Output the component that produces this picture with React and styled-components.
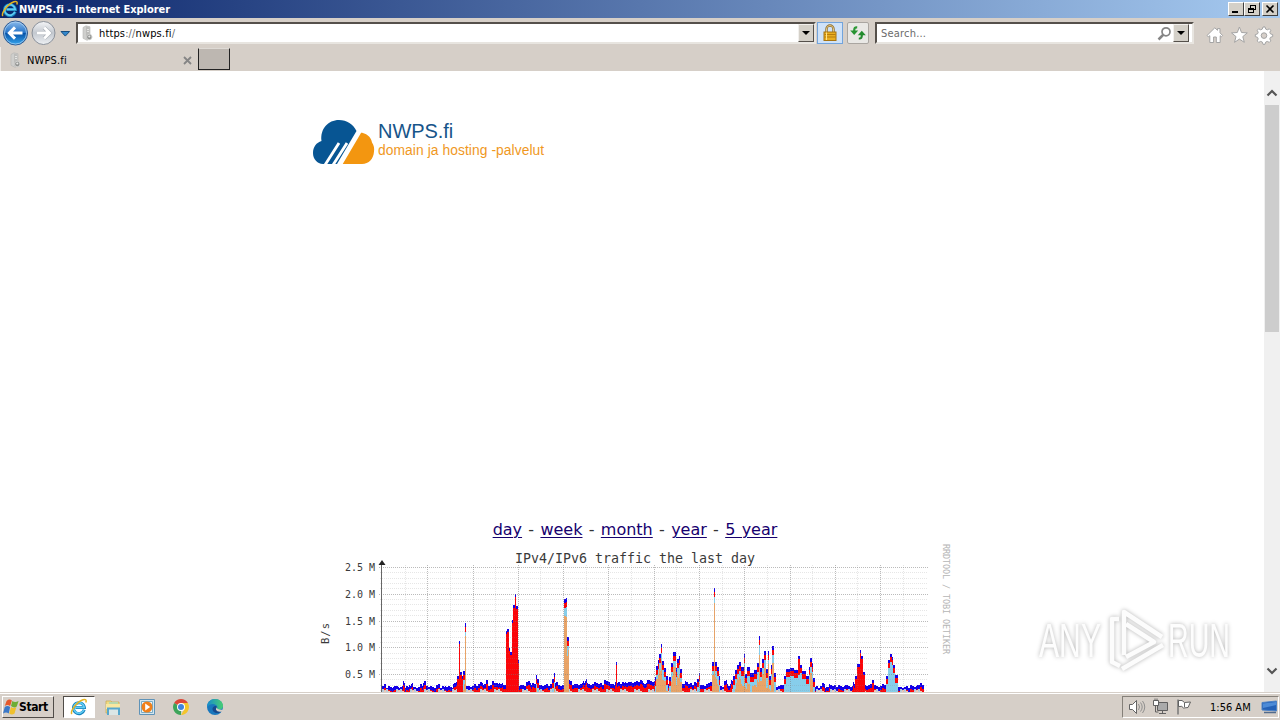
import React from "react";
import styled, { createGlobalStyle } from "styled-components";

// [x, top] steps of the traffic graph; the third value is what fills the bar
const TRAFFIC = [
  [382, 686, "q"], [384, 685, "q"], [386, 687, "q"], [393, 686, "q"], [399, 687, "q"], [403, 682, "q"],
  [405, 687, "q"], [409, 685, "q"], [411, 683, "q"], [413, 687, "q"], [420, 685, "q"], [423, 682, "q"],
  [426, 686, "q"], [432, 687, "q"], [436, 685, "q"], [440, 687, "q"], [445, 686, "q"], [450, 687, "q"],
  [453, 683, "q"], [457, 676, "r"], [459, 641, "r"], [460, 672, "r"], [462, 676, "r"], [463, 671, "t"],
  [465, 623, "t"], [466, 686, "q"], [474, 685, "q"], [480, 682, "q"], [483, 684, "q"], [486, 680, "q"],
  [488, 685, "q"], [492, 682, "q"], [496, 684, "q"], [499, 683, "q"], [503, 685, "q"], [506, 631, "r"],
  [507, 629, "r"], [509, 648, "r"], [510, 652, "r"], [512, 620, "r"], [513, 605, "r"], [515, 594, "r"],
  [516, 606, "r"], [518, 660, "r"], [519, 685, "q"], [526, 682, "q"], [531, 684, "q"], [536, 675, "t"],
  [537, 679, "t"], [539, 685, "q"], [552, 679, "t"], [554, 673, "t"], [555, 682, "q"], [558, 685, "q"],
  [564, 599, "t"], [566, 598, "t"], [567, 637, "t"], [569, 681, "q"], [572, 684, "q"], [583, 682, "q"],
  [585, 680, "q"], [587, 684, "q"], [594, 682, "q"], [598, 684, "q"], [604, 681, "q"], [610, 684, "q"],
  [615, 681, "q"], [616, 662, "r"], [617, 683, "q"], [625, 682, "q"], [638, 681, "q"], [643, 683, "q"],
  [647, 680, "q"], [652, 682, "q"], [655, 677, "t"], [656, 666, "t"], [658, 660, "t"], [659, 654, "t"],
  [661, 644, "t"], [662, 661, "t"], [664, 668, "t"], [666, 676, "t"], [668, 683, "q"], [669, 677, "t"],
  [671, 663, "t"], [673, 652, "t"], [676, 668, "t"], [677, 659, "t"], [679, 656, "t"], [680, 669, "t"],
  [682, 684, "q"], [685, 681, "q"], [688, 684, "q"], [694, 683, "q"], [697, 679, "s"], [699, 673, "s"],
  [700, 685, "q"], [706, 684, "q"], [710, 681, "q"], [712, 662, "t"], [714, 588, "t"], [715, 662, "t"],
  [717, 667, "t"], [719, 676, "t"], [720, 686, "q"], [724, 681, "q"], [727, 685, "q"], [731, 681, "q"],
  [733, 676, "t"], [735, 670, "t"], [737, 665, "t"], [739, 662, "t"], [741, 667, "t"], [744, 654, "t"],
  [745, 674, "t"], [747, 667, "t"], [750, 673, "t"], [754, 670, "t"], [757, 663, "t"], [759, 636, "t"],
  [760, 668, "t"], [762, 659, "t"], [764, 651, "t"], [766, 669, "t"], [768, 651, "t"], [769, 676, "t"],
  [771, 665, "t"], [772, 646, "t"], [774, 673, "t"], [776, 686, "q"], [782, 684, "q"], [784, 676, "s"],
  [786, 669, "s"], [790, 668, "s"], [794, 670, "s"], [798, 656, "r2"], [800, 665, "s"], [802, 671, "s"],
  [806, 676, "s"], [809, 667, "s"], [810, 658, "t"], [812, 663, "t"], [813, 678, "t"], [815, 687, "q"],
  [822, 683, "q"], [825, 687, "q"], [829, 684, "q"], [832, 686, "q"], [845, 685, "q"], [850, 687, "q"],
  [853, 683, "q"], [855, 676, "r"], [857, 664, "r"], [860, 650, "r"], [861, 656, "r"], [863, 672, "r"],
  [865, 685, "q"], [872, 680, "r"], [874, 686, "q"], [882, 684, "q"], [886, 676, "s"], [888, 660, "s"],
  [890, 654, "s"], [892, 657, "s"], [893, 665, "s"], [895, 675, "s"], [898, 687, "q"], [910, 686, "q"],
  [917, 685, "q"], [920, 682, "q"], [922, 685, "q"], [924, 700, "q"],
];

const BLUE = "#1400e8";
const RED = "#fb0509";
const SKY = "#87ceeb";
const SAND = "#e9a467";

function stack(x, top, kind) {
  const pair = x >> 1;
  const wobble = [0, 1, 0, -1, 1, 0, 0, 1, -1][(pair * 7) % 9];
  const y = kind === "q" ? top + wobble * 0.8 : top;
  const low = [0, 2, 0, 3, 1, 0, 3][(pair * 5) % 7];
  if (kind === "r") return [[y, 3, BLUE], [y + 3, 110, RED]];
  if (kind === "r2") return [[y, 3, BLUE], [y + 3, 16, RED], [y + 19, 40, SKY]];
  if (kind === "s") return [[y, 3, BLUE], [y + 3, 5, RED], [y + 8, 60, SKY]];
  if (kind === "t") {
    const sky = 4 + (pair % 4) * 2;
    return [[y, 4, BLUE], [y + 4, 5, RED], [y + 9, sky, SKY], [y + 9 + sky, 110, SAND]];
  }
  return [[y, 4, BLUE], [y + 4, 12, RED], [692 - low, low, low === 3 ? "#b9cfdf" : "#f1c9b5"]];
}

function bars() {
  const out = [];
  for (let i = 0; i < TRAFFIC.length - 1; i++) {
    const [from, top, kind] = TRAFFIC[i];
    for (let x = from; x < TRAFFIC[i + 1][0]; x++) {
      stack(x, top, kind).forEach(([y, h, fill], n) => {
        out.push(<rect key={x + "-" + n} x={x} y={y} width="1" height={h} fill={fill} />);
      });
    }
  }
  return out;
}

const MAJOR_Y = [567.5, 594.5, 621.5, 647.5, 674.5];
const LABELS = ["2.5 M", "2.0 M", "1.5 M", "1.0 M", "0.5 M"];

function TrafficChart() {
  const minorY = [];
  for (let i = 0; i < 24; i++) if (i % 5) minorY.push(Math.round(567 + i * 5.35) + 0.5);
  const verticals = Array.from({ length: 24 }, (_, i) => Math.round(382 + (i + 1) * 22.64) + 0.5);
  return (
    <Chart viewBox="310 542 650 150" shapeRendering="crispEdges">
      {bars()}
      <g stroke="#8c8c8c" strokeOpacity="0.22" strokeDasharray="1 1">
        {minorY.map((y) => <path key={y} d={`M380 ${y}H927`} />)}
        {verticals.map((x, i) => i % 2 === 0 && <path key={x} d={`M${x} 565V692`} />)}
      </g>
      <g stroke="#777" strokeOpacity="0.5" strokeDasharray="1 1">
        {MAJOR_Y.map((y) => <path key={y} d={`M379 ${y}H928`} />)}
        {verticals.map((x, i) => i % 2 === 1 && x < 900 && <path key={x} d={`M${x} 565V692`} />)}
      </g>
      <path d="M381.5 564V692" stroke="#666" />
      <path d="M378.5 565L382 560L385.5 565Z" fill="#222" shapeRendering="auto" />
      <g fontFamily="DejaVu Sans Mono, monospace" fill="#3a3a3a">
        <text x="515" y="563" fontSize="13.3" textLength="240">IPv4/IPv6 traffic the last day</text>
        {LABELS.map((t, i) => (
          <text key={t} x="345" y={MAJOR_Y[i] + 3.7} fontSize="10" textLength="30">{t}</text>
        ))}
        <text transform="translate(329 644) rotate(-90)" fontSize="10.5" textLength="21">B/s</text>
        <text transform="translate(943 544) rotate(90)" fontSize="8.5" textLength="110" fill="#b5b5b5">
          RRDTOOL / TOBI OETIKER
        </text>
      </g>
    </Chart>
  );
}

function IeIcon({ size }) {
  return (
    <svg width={size} height={size} viewBox="0 0 18 18">
      <path d="M14.200 11.800A5.500 5.500 0 1 1 14.400 9.500H5.500" fill="none" stroke="#1683bd" strokeWidth="3" />
      <path d="M13.900 11.800A5.300 5.300 0 1 1 14.200 9.300H5.500" fill="none" stroke="#61ccf4" strokeWidth="1.700" />
      <path d="M1.800 16C0 13 7 3.600 13 1.700c3-1 3.600.6 2.800 2.800" fill="none" stroke="#e5b422" strokeWidth="1.500" />
    </svg>
  );
}

function SiteIcon() {
  return (
    <svg width="14" height="16" viewBox="0 0 14 16">
      <path d="M3 2.5 6 .8l4 1V14l-3 1.3-4-2z" fill="#cfcfcd" stroke="#b5b5b3" strokeWidth=".6" />
      <path d="M6 1.500 9.500 2.500V13L6 14z" fill="#bdbdbb" />
      <path d="M7 4.5h2M7 6.5h2" stroke="#e5e5e3" />
      <circle cx="9.3" cy="12" r="2.7" fill="#8f918f" stroke="#d1d1cf" />
      <circle cx="9.3" cy="11.500" r="1.100" fill="#e8e8e6" />
    </svg>
  );
}

function NavIcons() {
  return (
    <svg width="76" height="28" viewBox="0 0 76 28">
      <defs>
        <linearGradient id="back" x2="0" y2="1">
          <stop offset="0" stopColor="#8dbcec" />
          <stop offset=".48" stopColor="#2875c8" />
          <stop offset=".52" stopColor="#0754a9" />
          <stop offset="1" stopColor="#38a8ef" />
        </linearGradient>
        <linearGradient id="forward" x2="0" y2="1">
          <stop offset="0" stopColor="#f4f5f7" />
          <stop offset=".5" stopColor="#c3c8cf" />
          <stop offset="1" stopColor="#eef1f4" />
        </linearGradient>
      </defs>
      <circle cx="15.5" cy="14" r="12" fill="url(#back)" stroke="#315a91" />
      <circle cx="15.5" cy="14" r="11" fill="none" stroke="#b5d9f5" strokeWidth=".7" />
      <path d="M22.500 14H10M15 8.400 9.400 14l5.600 5.600" fill="none" stroke="#fff" strokeWidth="3" />
      <circle cx="43.5" cy="14" r="11.5" fill="url(#forward)" stroke="#8b919a" />
      <path d="M37 14h12M44.200 8.600 49.600 14l-5.400 5.400" fill="none" stroke="#a6acb4" strokeWidth="4" />
      <path d="M37 14h12M44.200 8.600 49.600 14l-5.400 5.400" fill="none" stroke="#fff" strokeWidth="2.8" />
      <path d="M61 12.500h8.600l-4.300 4.600z" fill="#3388cc" stroke="#174e80" />
    </svg>
  );
}

function LockIcon() {
  return (
    <svg width="16" height="18" viewBox="0 0 16 18">
      <path d="M4.5 9V5a3.5 3.5 0 0 1 7 0v4" fill="none" stroke="#8b6d30" strokeWidth="2.4" />
      <path d="M4.5 9V5a3.5 3.5 0 0 1 7 0v4" fill="none" stroke="#e4c680" />
      <rect x="2" y="8" width="12" height="8.5" fill="#e9ae20" stroke="#a67310" />
      <path d="M2.5 10.5h11M2.5 13h11" stroke="#b77c0b" />
      <path d="M4.5 8.5v7.5" stroke="#ffe38a" />
    </svg>
  );
}

function RefreshIcon() {
  return (
    <svg width="16" height="14" viewBox="0 0 16 14">
      <path d="M7.200 1.400C4.800 1.200 4.200 2 4.200 5" fill="none" stroke="#2d9836" strokeWidth="2.200" />
      <path d="M.2 4.500h8L4.200 9z" fill="#269331" />
      <path d="M8.800 12.500c2.400.2 3-.6 3-3.600" fill="none" stroke="#248a30" strokeWidth="2.200" />
      <path d="M7.800 9.300h8L11.800 4.800z" fill="#218b2d" />
    </svg>
  );
}

function CommandIcons() {
  return (
    <svg width="70" height="20" viewBox="0 0 70 20">
      <g fill="#fff" stroke="#a4a4a4" strokeLinejoin="round">
        <path d="m1 10.5 7.8-7.7 2.7 2.5V3.6H14v4.2l2.6 2.7-1.2 1.2-1.2-1v6.8h-3.9V12H7.6v5.5H3.8v-6.8l-1.5 1.2z" />
        <path d="m33.4 2 2.1 5.5 5.8.4-4.5 3.7 1.5 5.7-4.9-3.2-4.9 3.2 1.5-5.7-4.5-3.7 5.8-.4z" />
        <path d="m57 2 2-.1.7 2.2 1.6.7 2-1 1.5 1.5-1 2 .7 1.6 2.2.7v2l-2.2.7-.7 1.6 1 2-1.5 1.5-2-1-1.6.7-.7 2.2h-2l-.7-2.2-1.6-.7-2 1-1.5-1.5 1-2-.7-1.6-2.2-.7v-2l2.2-.7.7-1.6-1-2 1.5-1.5 2 1 1.6-.7z" />
        <circle cx="58" cy="10.6" r="2.8" fill="#d6cfc9" />
      </g>
    </svg>
  );
}

function CloudLogo() {
  return (
    <svg width="64" height="48" viewBox="0 0 64 48">
      <path d="M11 45C5 44.500 1 40 1 34c0-6 3.500-10.500 8.500-12C8 10 16 1 27 1c8 0 14 4 17.500 11L25 45z" fill="#075593" />
      <path d="M48 13.500c6 .5 11 4 12 10 2 3 2.500 6 2 9C61.500 40 57 45 50 45H30z" fill="#f39610" />
      <path d="m13 46 14-22M21 46l14-22M28.500 46l20-34" stroke="#fff" strokeWidth="2.800" />
    </svg>
  );
}

function FlagIcon() {
  return (
    <svg width="16" height="18" viewBox="0 0 18 18" preserveAspectRatio="none">
      <path d="M4 3q3-2.500 6-.5L8 8Q5 6 2 8z" fill="#e4582c" />
      <path d="M10.500 3q3 2 7 0l-2 5.500q-3 2-6.500-.5z" fill="#6dad35" />
      <path d="M2 9q3-2 6 0l-1.500 6.500q-3-2-6.500 0z" fill="#3a78c8" />
      <path d="M9 9q3 2 6 0L13 15.500q-3 2-6 0z" fill="#efc02d" />
    </svg>
  );
}

function FolderIcon() {
  return (
    <svg width="18" height="18" viewBox="0 0 18 18">
      <path d="M2 3h5l1 1h7v11H2z" fill="#efdb86" stroke="#c4a64e" strokeWidth=".7" />
      <path d="M5 4h9v4H5z" fill="#b8d9ab" />
      <path d="M2 6h14v5H2z" fill="#f8e7a0" />
      <path d="M5 10h9v7H5z" fill="#dbe6e6" />
      <path d="M4 17v-6.500h11V17" fill="none" stroke="#56a7cd" strokeWidth="2" />
    </svg>
  );
}

function MediaIcon() {
  return (
    <svg width="18" height="18" viewBox="0 0 18 18">
      <path d="M1.500 1.500h15v15h-15z" fill="#d4e6ef" stroke="#5f93b8" />
      <path d="M3.500 3.500h11v11h-11z" fill="#eff6f9" stroke="#7aacc5" />
      <circle cx="9" cy="9" r="5.500" fill="#f0801a" />
      <path d="m7.200 5.500 5 3.500-5 3.500z" fill="#fff" />
    </svg>
  );
}

function ChromeIcon() {
  return (
    <svg width="18" height="18" viewBox="0 0 18 18">
      <path d="M9 9 2.100 5A8 8 0 0 1 15.900 5H9z" fill="#dd4738" />
      <path d="M9 9 9 17A8 8 0 0 1 2.100 5z" fill="#3da45a" />
      <path d="M9 9V5h6.900A8 8 0 0 1 9 17l3.500-6z" fill="#f4c52b" />
      <circle cx="9" cy="9" r="4" fill="#fff" />
      <circle cx="9" cy="9" r="3" fill="#4083df" />
    </svg>
  );
}

function EdgeIcon() {
  return (
    <svg width="18" height="18" viewBox="0 0 18 18">
      <defs>
        <linearGradient id="edge">
          <stop offset="0" stopColor="#168bce" />
          <stop offset="1" stopColor="#48cf72" />
        </linearGradient>
      </defs>
      <circle cx="9" cy="9" r="8" fill="#1977bd" />
      <path d="M1 9C1 4 4.600 1 9 1c4.600 0 8 3 8 7 0 3-3 4.600-6 3.600l.4-2.600C11 6 5 4 1 9z" fill="url(#edge)" />
      <path d="M11 9.200C9 12 13 14.500 16 12.500 13 17 6 15 6.500 10.500 7 8 10 7 11 9.200z" fill="#16498d" />
      <path d="M10.400 9.300q1 3 7 2.200v1.800q-6 1.500-7.500-1.500z" fill="#d6cfc8" />
    </svg>
  );
}

function TrayIcons() {
  return (
    <svg width="66" height="18" viewBox="0 0 66 18">
      <g fill="#fff" stroke="#555" strokeWidth=".9">
        <path d="M1.500 6.500h3L8.500 2.500v13l-4-4h-3z" />
        <path d="M10.500 6q2 3 0 6M12.500 4.500q3.400 4.500 0 9M14.500 3q4.500 6 0 12" fill="none" stroke="#888" />
        <path d="M29.500 4.500h10v8h-10z" fill="#aaa" />
        <path d="M31 15.500h7M34.500 13v2.500M27.500 8v6h3" fill="none" />
        <path d="M25.500 2.500h5v5h-5zM27 .5v2M29 .5v2" />
        <path d="M50 1.500v15" stroke="#777" strokeWidth="1.500" />
        <path d="M50.500 2.500q4-1 6 2l6-.5-2.500 5.500-4.500.5q-1-2.500-5-1.500z" />
        <path d="M56.500 5v4" />
      </g>
    </svg>
  );
}

function Watermark() {
  return (
    <WatermarkArt viewBox="0 0 208 74">
      <g fill="#fdfdfd" fontFamily="Liberation Sans Narrow, Liberation Sans, sans-serif" fontSize="49">
        <text x="7" y="55" textLength="62" lengthAdjust="spacingAndGlyphs">ANY</text>
        <text x="136" y="55" textLength="62" lengthAdjust="spacingAndGlyphs">RUN</text>
      </g>
      <g fill="none" stroke="#fcfcfc" strokeWidth="4.500" strokeLinejoin="round">
        <path d="M92 53V10l38 25" />
        <path d="M87 17h-7v43l8 4" />
        <path d="m90 67 41-24" />
        <path d="m94 22 28 18-28 15" />
      </g>
    </WatermarkArt>
  );
}

function App() {
  return (
    <Screen>
      <GlobalStyle />
      <TitleBar>
        <IeIcon size={18} />
        <Title>NWPS.fi - Internet Explorer</Title>
        <WindowButton><svg width="10" height="10"><path d="M1 8h6" stroke="#000" strokeWidth="2" /></svg></WindowButton>
        <WindowButton>
          <svg width="10" height="10" shapeRendering="crispEdges">
            <path d="M3.500 4V1.500h5v4H7M3 1.500h6M1.500 4.500h5v4h-5zM1 5h6" fill="none" stroke="#000" />
          </svg>
        </WindowButton>
        <WindowButton $gap>
          <svg width="10" height="10"><path d="m1.500 1.500 7 7m0-7-7 7" stroke="#000" strokeWidth="1.600" /></svg>
        </WindowButton>
      </TitleBar>
      <Toolbar>
        <NavIcons />
        <Field $width={740}>
          <SiteIcon />
          <FieldText $spacing="0.13px"><Dark>https</Dark>://<Dark>nwps.fi</Dark>/</FieldText>
          <DropButton><Caret /></DropButton>
        </Field>
        <LockButton><LockIcon /></LockButton>
        <RefreshButton><RefreshIcon /></RefreshButton>
        <Field $width={319}>
          <FieldText $search $spacing="0.2px">Search...</FieldText>
          <svg width="15" height="15">
            <path d="m1.500 13.500 5-5" stroke="#858585" strokeWidth="2.500" />
            <circle cx="9" cy="5.800" r="4" fill="#fff" stroke="#858585" strokeWidth="1.700" />
          </svg>
          <DropButton $inset><Caret /></DropButton>
        </Field>
        <Commands><CommandIcons /></Commands>
      </Toolbar>
      <TabRow>
        <Tab>
          <SiteIcon />
          <TabText>NWPS.fi</TabText>
          <svg width="9" height="9"><path d="m1 1 7 7m0-7-7 7" stroke="#858585" strokeWidth="1.800" /></svg>
        </Tab>
        <NewTab />
      </TabRow>
      <Viewport>
        <Page>
          <Brand>
            <CloudLogo />
            <BrandText>
              <BrandName>NWPS.fi</BrandName>
              <Tagline>domain ja hosting -palvelut</Tagline>
            </BrandText>
          </Brand>
          <Periods>
            <a href="#day">day</a> - <a href="#week">week</a> - <a href="#month">month</a> -{" "}
            <a href="#year">year</a> - <a href="#5year">5 year</a>
          </Periods>
          <TrafficChart />
        </Page>
        <Scrollbar>
          <svg width="12" height="8"><path d="m1.500 6.500 4.500-4.500 4.500 4.500" fill="none" stroke="#555" strokeWidth="2.200" /></svg>
          <Thumb />
          <svg width="12" height="8"><path d="m1.500 1.500 4.500 4.500 4.500-4.500" fill="none" stroke="#555" strokeWidth="2.200" /></svg>
        </Scrollbar>
        <Watermark />
      </Viewport>
      <Taskbar>
        <StartButton>
          <FlagIcon />
          Start
        </StartButton>
        <ActiveTask><IeIcon size={18} /></ActiveTask>
        <Launchers>
          <FolderIcon />
          <MediaIcon />
          <ChromeIcon />
          <EdgeIcon />
        </Launchers>
        <Tray>
          <TrayIcons />
          <Clock>1:56 AM</Clock>
          <svg width="17" height="14" viewBox="0 0 17 14">
            <path d="M1 2.500 15.500 1v10L1 10z" fill="#2461b7" stroke="#4e83c6" />
            <path d="M2 3.500 15 2v3L2 8z" fill="#4d8bd7" />
            <path d="M3 12.500h12" stroke="#526b8c" strokeWidth="1.500" />
          </svg>
        </Tray>
      </Taskbar>
    </Screen>
  );
}
export default App;

const GlobalStyle = createGlobalStyle`
  body {
    margin: 0;
    overflow: hidden;
  }
  * {
    box-sizing: border-box;
  }
  svg {
    display: block;
    flex-shrink: 0;
  }
`;

const Screen = styled.div`
  display: flex;
  flex-direction: column;
  width: 1280px;
  height: 720px;
  background: #d6cfc8;
  color: #000;
  font-family: "DejaVu Sans Condensed", "DejaVu Sans", sans-serif;
  font-stretch: condensed;
  font-size: 11px;
  white-space: nowrap;
`;
const TitleBar = styled.div`
  display: flex;
  align-items: center;
  height: 18px;
  padding: 0 2px 0 1px;
  background: linear-gradient(to right, #0a246a, #a6caf0);
`;
const Title = styled.div`
  flex: 1;
  color: #fff;
  font-weight: bold;
  letter-spacing: -0.03px;
`;
const WindowButton = styled.div`
  display: flex;
  align-items: center;
  justify-content: center;
  width: 16px;
  height: 14px;
  margin-left: ${(props) => (props.$gap ? "2px" : "0")};
  background: #d4d0c8;
  border: 1px solid;
  border-color: #fff #404040 #404040 #fff;
`;
const Toolbar = styled.div`
  display: flex;
  align-items: center;
  height: 29px;
  padding-top: 1px;
`;
const Field = styled.div`
  display: flex;
  align-items: center;
  width: ${(props) => props.$width}px;
  height: 22px;
  padding: 0 1px 0 2px;
  background: #fff;
  border: 2px solid;
  border-color: #55504b #e8e5e0 #e8e5e0 #55504b;
`;
const FieldText = styled.div`
  flex: 1;
  padding-left: ${(props) => (props.$search ? "2px" : "5px")};
  color: #6b6b6b;
  letter-spacing: ${(props) => props.$spacing};
`;
const Dark = styled.span`
  color: #000;
`;
const DropButton = styled.div`
  display: flex;
  align-items: center;
  justify-content: center;
  width: 16px;
  height: 18px;
  margin-right: ${(props) => (props.$inset ? "2px" : "-1px")};
  margin-left: 1px;
  background: #d4d0c8;
  border: 1px solid;
  border-color: #f2f0ed #55504b #55504b #f2f0ed;
`;
const Caret = styled.div`
  border: 4px solid transparent;
  border-top-color: #000;
  border-bottom: 0;
`;
const LockButton = styled.div`
  display: flex;
  align-items: center;
  justify-content: center;
  width: 26px;
  height: 22px;
  margin-left: 1px;
  background: #cfe2f8;
  border: 1px solid #72a4dc;
`;
const RefreshButton = styled.div`
  display: flex;
  align-items: center;
  justify-content: center;
  width: 22px;
  height: 22px;
  margin: 0 6px 0 4px;
  background: #e9e8e5;
  border: 1px solid #aaa6a1;
  border-radius: 2px;
`;
const Commands = styled.div`
  padding: 3px 0 0 12px;
`;
const TabRow = styled.div`
  display: flex;
  height: 24px;
`;
const Tab = styled.div`
  display: flex;
  align-items: center;
  width: 197px;
  padding: 2px 5px 0 7px;
  border-left: 1px solid #efece8;
`;
const TabText = styled.div`
  flex: 1;
  padding-left: 5px;
  letter-spacing: 0.15px;
`;
const NewTab = styled.div`
  width: 32px;
  height: 22px;
  margin-top: 1px;
  margin-left: 1px;
  background: #bdb7b1;
  border: 1px solid #222;
  border-top-color: #dedad5;
`;
const Viewport = styled.div`
  position: relative;
  display: flex;
  height: 621px;
  background: #fff;
`;
const Page = styled.div`
  width: 1264px;
  height: 621px;
  padding: 48px 0 0 310px;
  overflow: hidden;
`;
const Brand = styled.div`
  display: flex;
  height: 48px;
  padding-left: 2px;
  font-family: "Liberation Sans", sans-serif;
`;
const BrandText = styled.div`
  padding: 1px 0 0 2px;
`;
const BrandName = styled.div`
  color: #17558a;
  font-size: 20px;
  line-height: 23px;
  letter-spacing: -0.05px;
`;
const Tagline = styled.div`
  color: #f0981e;
  font-size: 13.8px;
  line-height: 16px;
  letter-spacing: 0.08px;
`;
const Periods = styled.div`
  width: 650px;
  height: 26px;
  margin-top: 349px;
  padding-top: 1px;
  color: #333;
  font-family: "DejaVu Sans", sans-serif;
  font-stretch: normal;
  font-size: 16px;
  line-height: 25px;
  word-spacing: 1.2px;
  text-align: center;
  a {
    color: #16006e;
    text-underline-offset: 2px;
    text-decoration-thickness: 1px;
  }
`;
const Chart = styled.svg`
  width: 650px;
  height: 150px;
`;
const Scrollbar = styled.div`
  display: flex;
  flex-direction: column;
  align-items: center;
  width: 16px;
  padding-top: 18px;
  background: #f0f0f0;
`;
const Thumb = styled.div`
  width: 14px;
  height: 227px;
  margin: 8px 0 335px;
  background: #cdcdcd;
`;
const WatermarkArt = styled.svg`
  position: absolute;
  right: 40px;
  bottom: 16px;
  width: 208px;
  height: 74px;
  overflow: visible;
  filter: drop-shadow(0 0 2px rgba(0, 0, 0, 0.3));
`;
const Taskbar = styled.div`
  display: flex;
  align-items: center;
  height: 28px;
  padding: 1px 1px 0 2px;
  border-top: 1px solid #d6cfc8;
  box-shadow: inset 0 1px #fff;
`;
const StartButton = styled.div`
  display: flex;
  align-items: center;
  width: 52px;
  height: 22px;
  border: 1px solid;
  border-color: #fff #504c48 #504c48 #fff;
  font-size: 12px;
  font-weight: bold;
  letter-spacing: -0.4px;
`;
const ActiveTask = styled.div`
  display: flex;
  align-items: center;
  justify-content: center;
  width: 32px;
  height: 22px;
  margin-left: 9px;
  background: #fff;
  border: 1px solid;
  border-color: #504c48 #fff #fff #504c48;
`;
const Launchers = styled.div`
  display: flex;
  flex: 1;
  gap: 16px;
  padding-left: 9px;
`;
const Tray = styled.div`
  display: flex;
  align-items: center;
  width: 157px;
  height: 22px;
  padding-left: 5px;
  border: 1px solid;
  border-color: #858079 #fff #fff #858079;
`;
const Clock = styled.div`
  flex: 1;
  padding-left: 16px;
`;
